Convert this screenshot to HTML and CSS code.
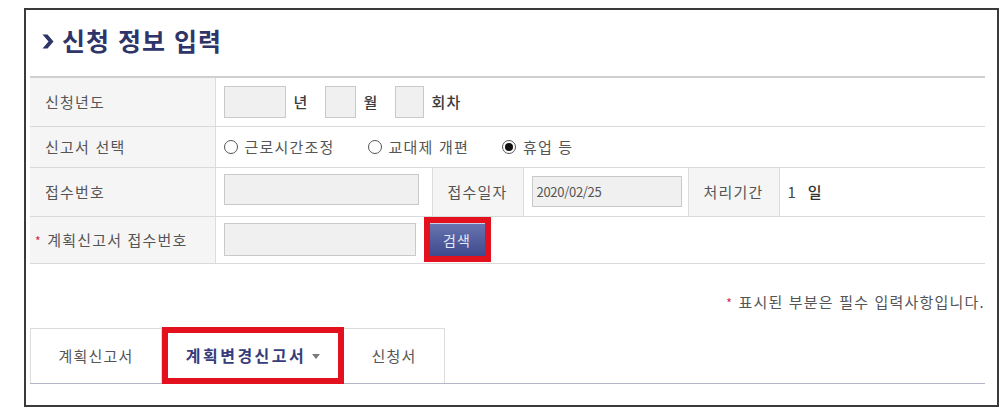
FILE: index.html
```html
<!DOCTYPE html>
<html lang="ko">
<head>
    <meta charset="UTF-8">
    <meta name="viewport" content="width=device-width, initial-scale=1.0">
    <title>신청 정보 입력</title>
    <link rel="stylesheet" href="styles.css">
</head>
<body>
    <div class="frame">
        <h1 class="title">
            <svg class="chev" width="12" height="15" viewBox="0 0 12 15"><polygon points="0.5,0.5 5.5,0.5 11.5,7.5 5.5,14.5 0.5,14.5 6.5,7.5" fill="#2f3568"/></svg>
            신청 정보 입력
        </h1>

        <table class="form-table">
            <colgroup>
                <col style="width:185px">
                <col style="width:217px">
                <col style="width:91px">
                <col style="width:165px">
                <col style="width:91px">
                <col style="width:206px">
            </colgroup>
            <tr class="row-year">
                <th>신청년도</th>
                <td colspan="5">
                    <div class="inline">
                        <span class="box w62"></span><b class="unit">년</b>
                        <span class="box w31"></span><b class="unit">월</b>
                        <span class="box w29"></span><b class="unit">회차</b>
                    </div>
                </td>
            </tr>
            <tr class="row-type">
                <th>신고서 선택</th>
                <td colspan="5">
                    <div class="inline">
                        <label class="opt"><span class="radio"></span>근로시간조정</label>
                        <label class="opt"><span class="radio"></span>교대제 개편</label>
                        <label class="opt"><span class="radio on"></span>휴업 등</label>
                    </div>
                </td>
            </tr>
            <tr class="row-no">
                <th>접수번호</th>
                <td><span class="box w195"></span></td>
                <th class="mid">접수일자</th>
                <td><span class="box w150 date">2020/02/25</span></td>
                <th class="mid">처리기간</th>
                <td class="days">1 &nbsp;<b>일</b></td>
            </tr>
            <tr class="row-plan">
                <th class="req"><span class="star">*</span> 계획신고서 접수번호</th>
                <td colspan="5">
                    <div class="inline">
                        <span class="box w192"></span>
                        <span class="mark"><button class="btn-search">검색</button></span>
                    </div>
                </td>
            </tr>
        </table>

        <p class="note"><span class="star">*</span> 표시된 부분은 필수 입력사항입니다.</p>

        <div class="tabs">
            <div class="tab">계획신고서</div>
            <div class="tab active">계획변경신고서<span class="caret"></span></div>
            <div class="tab">신청서</div>
        </div>
    </div>
</body>
</html>
```

FILE: styles.css
```css
body {
    margin: 0;
    background-color: #ffffff;
    font-family: "Noto Sans CJK KR", "Noto Sans", sans-serif;
    color: #555555;
}

.frame {
    box-sizing: border-box;
    width: 975px;
    height: 399px;
    margin: 8px 0 0 24px;
    padding: 0 11px 0 4px;
    border: 2px solid #3a3a3a;
}

.title {
    display: flex;
    align-items: center;
    gap: 8px;
    height: 60px;
    margin: 0;
    padding: 0 0 6px 12px;
    font-size: 25px;
    font-weight: bold;
    color: #2f3568;
    letter-spacing: 1px;
}

.chev {
    margin-top: 2px;
}

.form-table {
    width: 955px;
    border-collapse: collapse;
    table-layout: fixed;
    border-top: 2px solid #cfcfcf;
    font-size: 15px;
    letter-spacing: 1.2px;
}

.form-table th,
.form-table td {
    padding: 0;
    border-bottom: 1px solid #d9d9d9;
    text-align: left;
    font-weight: normal;
}

.form-table th {
    padding-left: 15px;
    background-color: #f5f5f5;
    border-right: 1px solid #dcdcdc;
}

.form-table th.mid {
    text-align: center;
    border-left: 1px solid #dcdcdc;
    padding-left: 0;
}

.form-table th.req {
    padding-left: 5px;
}

.form-table td {
    padding-left: 8px;
}

.row-year { height: 49px; }
.row-type { height: 41px; }
.row-no { height: 49px; }
.row-plan { height: 47px; }

.inline {
    display: flex;
    align-items: center;
}

.box {
    display: inline-block;
    box-sizing: border-box;
    height: 32px;
    background-color: #f0f0f0;
    border: 1px solid #c9c9c9;
}

.w62 { width: 62px; }
.w31 { width: 31px; }
.w29 { width: 29px; }
.w195 { width: 195px; height: 31px; }
.w192 { width: 192px; height: 33px; }
.w150 { width: 150px; height: 31px; }

.date {
    padding-left: 4px;
    font-size: 13px;
    line-height: 29px;
    letter-spacing: -0.3px;
    color: #555555;
}

.unit {
    color: #3a3a3a;
    font-weight: 500;
    margin: 0 16px 0 8px;
}

.opt {
    display: flex;
    align-items: center;
    margin-right: 33px;
}

.radio {
    position: relative;
    box-sizing: border-box;
    width: 14px;
    height: 14px;
    margin-right: 7px;
    border: 1px solid #555555;
    border-radius: 50%;
    background-color: #ffffff;
}

.radio.on::after {
    content: "";
    position: absolute;
    left: 2px;
    top: 2px;
    width: 8px;
    height: 8px;
    border-radius: 50%;
    background-color: #111111;
}

.days {
    padding-left: 11px;
    color: #444444;
}

.days b {
    color: #333333;
    font-weight: 500;
}

.star {
    color: #d2234b;
    font-size: 12px;
}

.mark {
    display: inline-block;
    margin-left: 8px;
    border: 6px solid #e3101d;
    line-height: 0;
}

.btn-search {
    width: 55px;
    height: 33px;
    padding: 0;
    border: none;
    border-top: 1px solid #c9cde6;
    background: linear-gradient(#6774b0, #3e4a8c);
    color: #e6e8f4;
    font-family: "Noto Sans CJK KR", sans-serif;
    font-size: 14px;
    letter-spacing: 1px;
}

.note {
    margin: 0;
    height: 64px;
    padding-top: 27px;
    box-sizing: border-box;
    text-align: right;
    font-size: 15px;
    letter-spacing: 1.2px;
    color: #555555;
    padding-right: 1px;
}

.tabs {
    display: flex;
    width: 955px;
    height: 55px;
    border-bottom: 1px solid #b3b6c8;
}

.tab {
    box-sizing: border-box;
    display: flex;
    align-items: center;
    justify-content: center;
    height: 55px;
    border: 1px solid #dcdcdc;
    border-bottom: none;
    font-size: 15px;
    letter-spacing: 1.2px;
    color: #555555;
}

.tab:first-child { width: 132px; }
.tab:last-child { width: 101px; border-left: none; }

.tab.active {
    width: 182px;
    margin-top: -1px;
    height: 57px;
    border: 6px solid #e3101d;
    font-weight: bold;
    font-size: 16px;
    letter-spacing: 2.5px;
    color: #363d7a;
    background-color: #ffffff;
}

.caret {
    width: 0;
    height: 0;
    margin-left: 6px;
    margin-top: 3px;
    border-left: 4px solid transparent;
    border-right: 4px solid transparent;
    border-top: 5px solid #7a7a7a;
}
```
